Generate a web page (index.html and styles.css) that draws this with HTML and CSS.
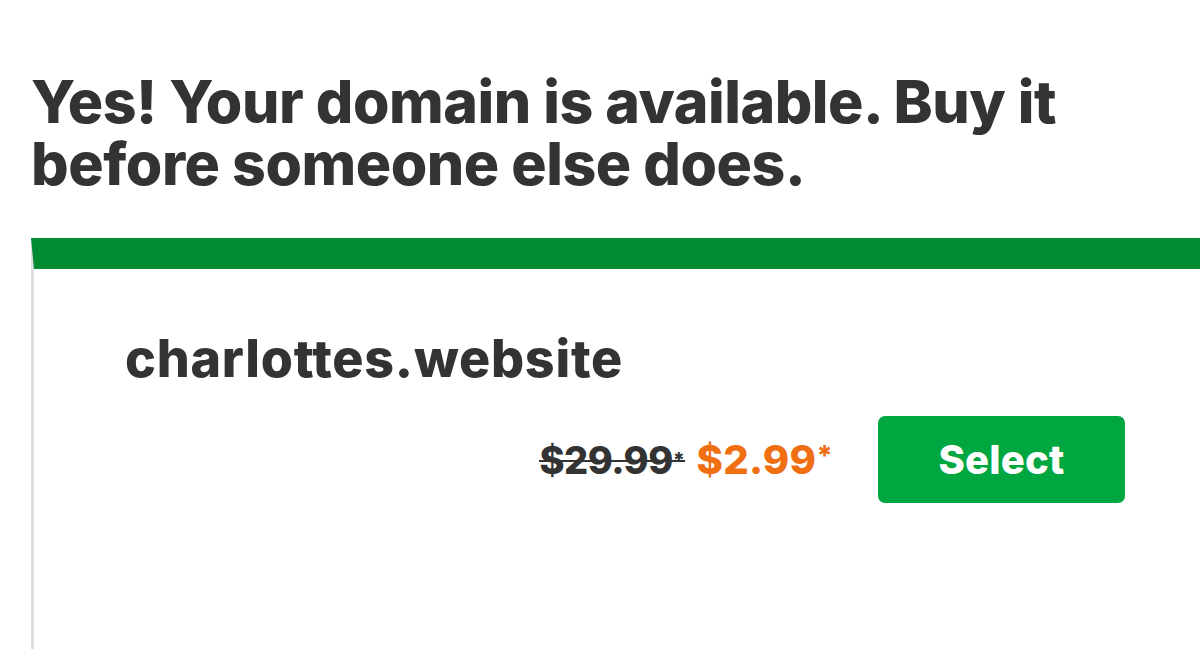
FILE: index.html
```html
<!DOCTYPE html>
<html>
    <head>
        <meta name="viewport" content="width=device-width, initial-scale=1.0">
        <link rel="stylesheet" href="styles.css">
    </head>
    <body>
        <div class="page">
            <h1 class="headline">Yes! Your domain is available. Buy it before someone else does.</h1>
            <div class="result-card">
                <div class="domain-name">charlottes.website</div>
                <div class="purchase-row">
                    <div class="prices">
                        <span class="old-price">$29.99<small>*</small></span>
                        <span class="new-price">$2.99<small>*</small></span>
                    </div>
                    <button class="select-btn">Select</button>
                </div>
            </div>
        </div>
    </body>
</html>
```

FILE: styles.css
```css
html, body {
    padding: 0;
    margin: 0;
    height: 100%;
    overflow: hidden;
    background: white;
}
.page {
    padding-left: 31px;
    font-family: "Inter", "Liberation Sans", sans-serif;
    color: #333;
}
.headline {
    margin: 71px 0 0 0;
    width: 1100px;
    font-size: 59px;
    line-height: 62px;
    font-weight: 800;
    letter-spacing: -0.45px;
}
.result-card {
    margin-top: 43px;
    height: 380px;
    border-top: 31px solid #008a32;
    border-left: 3px solid #dddddd;
    padding: 0 75px 0 91px;
}
.domain-name {
    padding-top: 65px;
    font-size: 52px;
    line-height: 50px;
    font-weight: 800;
    letter-spacing: 0.75px;
}
.purchase-row {
    display: flex;
    justify-content: flex-end;
    align-items: center;
    margin-top: 32px;
}
.prices {
    display: flex;
    align-items: baseline;
    gap: 12px;
    margin-right: 45px;
    font-size: 38px;
    font-weight: 800;
}
.prices small {
    font-size: 0.7em;
    vertical-align: 0.3em;
}
.old-price {
    position: relative;
    color: #333;
    letter-spacing: -0.5px;
}
.old-price::after {
    content: "";
    position: absolute;
    left: 0;
    right: 0;
    top: 50%;
    height: 2px;
    background: #333;
}
.old-price small {
    font-size: 0.55em;
}
.new-price {
    color: #ef6f12;
    font-size: 40px;
    letter-spacing: 0.3px;
}
.select-btn {
    width: 247px;
    height: 87px;
    border: 0;
    border-radius: 7px;
    background: #00a63f;
    color: white;
    font-family: "Inter", "Liberation Sans", sans-serif;
    font-size: 40px;
    font-weight: 800;
    letter-spacing: 0.2px;
    cursor: pointer;
}
```
